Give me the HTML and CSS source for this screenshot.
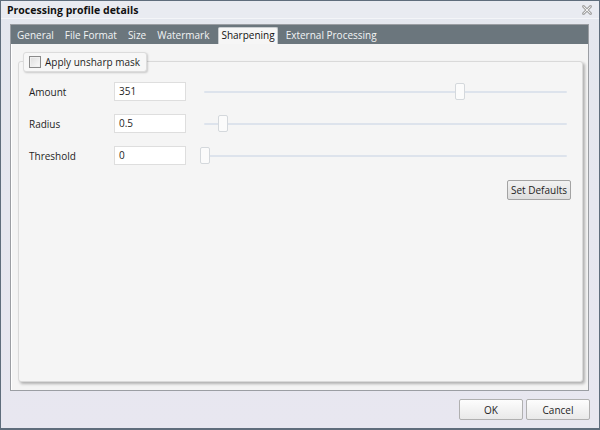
FILE: index.html
```html
<!DOCTYPE html>
<html>
<head>
<meta charset="utf-8">
<link rel="stylesheet" href="styles.css">
</head>
<body>
<div class="dialog">
  <div class="titlebar">
    <span class="title">Processing profile details</span>
    <svg class="close" width="10" height="10" viewBox="0 0 10 10">
      <path d="M1.5 1.5 L8.5 8.5 M8.5 1.5 L1.5 8.5" stroke="#a8a8a8" stroke-width="3" fill="none" stroke-linecap="square"/>
      <path d="M1.5 1.5 L8.5 8.5 M8.5 1.5 L1.5 8.5" stroke="#f0f0f0" stroke-width="1" fill="none"/>
    </svg>
  </div>
  <div class="panel">
    <div class="tabs">
      <span class="tab">General</span>
      <span class="tab">File Format</span>
      <span class="tab">Size</span>
      <span class="tab">Watermark</span>
      <span class="tab active">Sharpening</span>
      <span class="tab">External Processing</span>
    </div>
    <div class="content">
      <div class="fieldset">
        <div class="legend"><span class="checkbox"></span><span>Apply unsharp mask</span></div>
        <div class="rows">
          <div class="row">
            <span class="label">Amount</span>
            <span class="input">351</span>
            <div class="slider"><span class="track"></span><span class="thumb" style="left:251px"></span></div>
          </div>
          <div class="row">
            <span class="label">Radius</span>
            <span class="input">0.5</span>
            <div class="slider"><span class="track"></span><span class="thumb" style="left:14px"></span></div>
          </div>
          <div class="row">
            <span class="label">Threshold</span>
            <span class="input">0</span>
            <div class="slider"><span class="track"></span><span class="thumb" style="left:-4px"></span></div>
          </div>
        </div>
        <div class="defaults"><button class="btn small">Set Defaults</button></div>
      </div>
    </div>
  </div>
  <div class="footer">
    <button class="btn big">OK</button>
    <button class="btn big">Cancel</button>
  </div>
</div>
</body>
</html>
```
FILE: styles.css
```css
html, body {
  margin: 0;
  padding: 0;
}
body {
  width: 600px;
  height: 430px;
  font-family: "Open Sans", "Noto Sans", sans-serif;
  font-size: 10px;
  color: #1e1e1e;
}
.dialog {
  box-sizing: border-box;
  width: 600px;
  height: 430px;
  border: 1px solid #5f6d7c;
  border-bottom-width: 2px;
  background: linear-gradient(#e4e7ee, #e8e7f0);
  display: flex;
  flex-direction: column;
}
.titlebar {
  height: 17px;
  display: flex;
  align-items: center;
  justify-content: space-between;
  padding: 0 7px 0 6px;
  background: #e9ebf1;
  border-bottom: 1px solid #f4f5f8;
}
.title {
  font-weight: bold;
  font-size: 10.5px;
  color: #111;
}
.close {
  margin-top: 1px;
}
.panel {
  margin: 5px 10px 0 9px;
  height: 365px;
  border: 1px solid #9b9ea3;
  background: #f4f4f4;
  display: flex;
  flex-direction: column;
  box-shadow: inset 1px 0 0 #fff;
}
.tabs {
  height: 19px;
  background: #6b767d;
  display: flex;
  align-items: flex-end;
  padding-left: 2px;
}
.tab {
  color: #f2f4f5;
  padding: 0 4px 2px 4px;
  margin-right: 3px;
  line-height: 14px;
}
.tab.active {
  background: #f6f6f6;
  color: #111;
  border: 1px solid #c9cdd0;
  border-bottom: none;
  border-radius: 2px 2px 0 0;
  padding: 0 2px 2px 2px;
  height: 14px;
  margin-left: 2px;
  margin-right: 4px;
}
.content {
  flex: 1;
  padding: 17px 5px 8px 7px;
  display: flex;
}
.fieldset {
  flex: 1;
  position: relative;
  border: 1px solid #d9d9d9;
  border-radius: 3px;
  background: #f5f5f5;
  box-shadow: 2px 2px 3px rgba(0,0,0,0.28);
  padding: 20px 15px 0 10px;
}
.legend {
  position: absolute;
  left: 4px;
  top: -10px;
  height: 20px;
  box-sizing: border-box;
  display: flex;
  align-items: center;
  gap: 4px;
  padding: 0 6px 0 5px;
  background: #f7f7f7;
  border: 1px solid #dcdcdc;
  border-radius: 3px;
  box-shadow: 1px 1px 2px rgba(0,0,0,0.18);
  font-size: 10px;
  white-space: nowrap;
}
.checkbox {
  width: 10px;
  height: 10px;
  border: 1px solid #8a8a8a;
  background: linear-gradient(135deg, #dcdcdc, #fafafa);
  box-shadow: inset 0 0 0 1px #f0f0f0;
}
.rows {
  display: flex;
  flex-direction: column;
  gap: 13px;
}
.row {
  display: grid;
  grid-template-columns: 67px 72px 1fr;
  column-gap: 18px;
  align-items: center;
  height: 19px;
}
.input {
  box-sizing: border-box;
  height: 19px;
  border: 1px solid #dedede;
  background: #fff;
  padding-left: 4px;
  line-height: 17px;
}
.slider {
  position: relative;
  height: 17px;
}
.track {
  position: absolute;
  left: 0;
  right: 0;
  top: 8px;
  height: 2px;
  background: #dde3ec;
  border-radius: 1px;
}
.thumb {
  position: absolute;
  top: 0;
  width: 8px;
  height: 15px;
  background: #fbfbfb;
  border: 1px solid #d4d8dc;
  border-radius: 2px;
}
.defaults {
  display: flex;
  justify-content: flex-end;
  margin-top: 15px;
  margin-right: -4px;
}
.btn {
  font-family: "Open Sans", "Noto Sans", sans-serif;
  font-size: 10px;
  color: #1e1e1e;
  border: 1px solid #a3a3a3;
  border-radius: 2px;
  padding: 0;
  cursor: default;
}
.btn.small {
  width: 64px;
  height: 20px;
  background: linear-gradient(#f2f2f2, #dedede);
}
.footer {
  display: flex;
  justify-content: flex-end;
  gap: 3px;
  padding: 8px 9px 0 0;
}
.btn.big {
  width: 64px;
  height: 21px;
  background: linear-gradient(#fdfdfd, #e9e9e9);
  border-color: #b0b0b0;
}
```
